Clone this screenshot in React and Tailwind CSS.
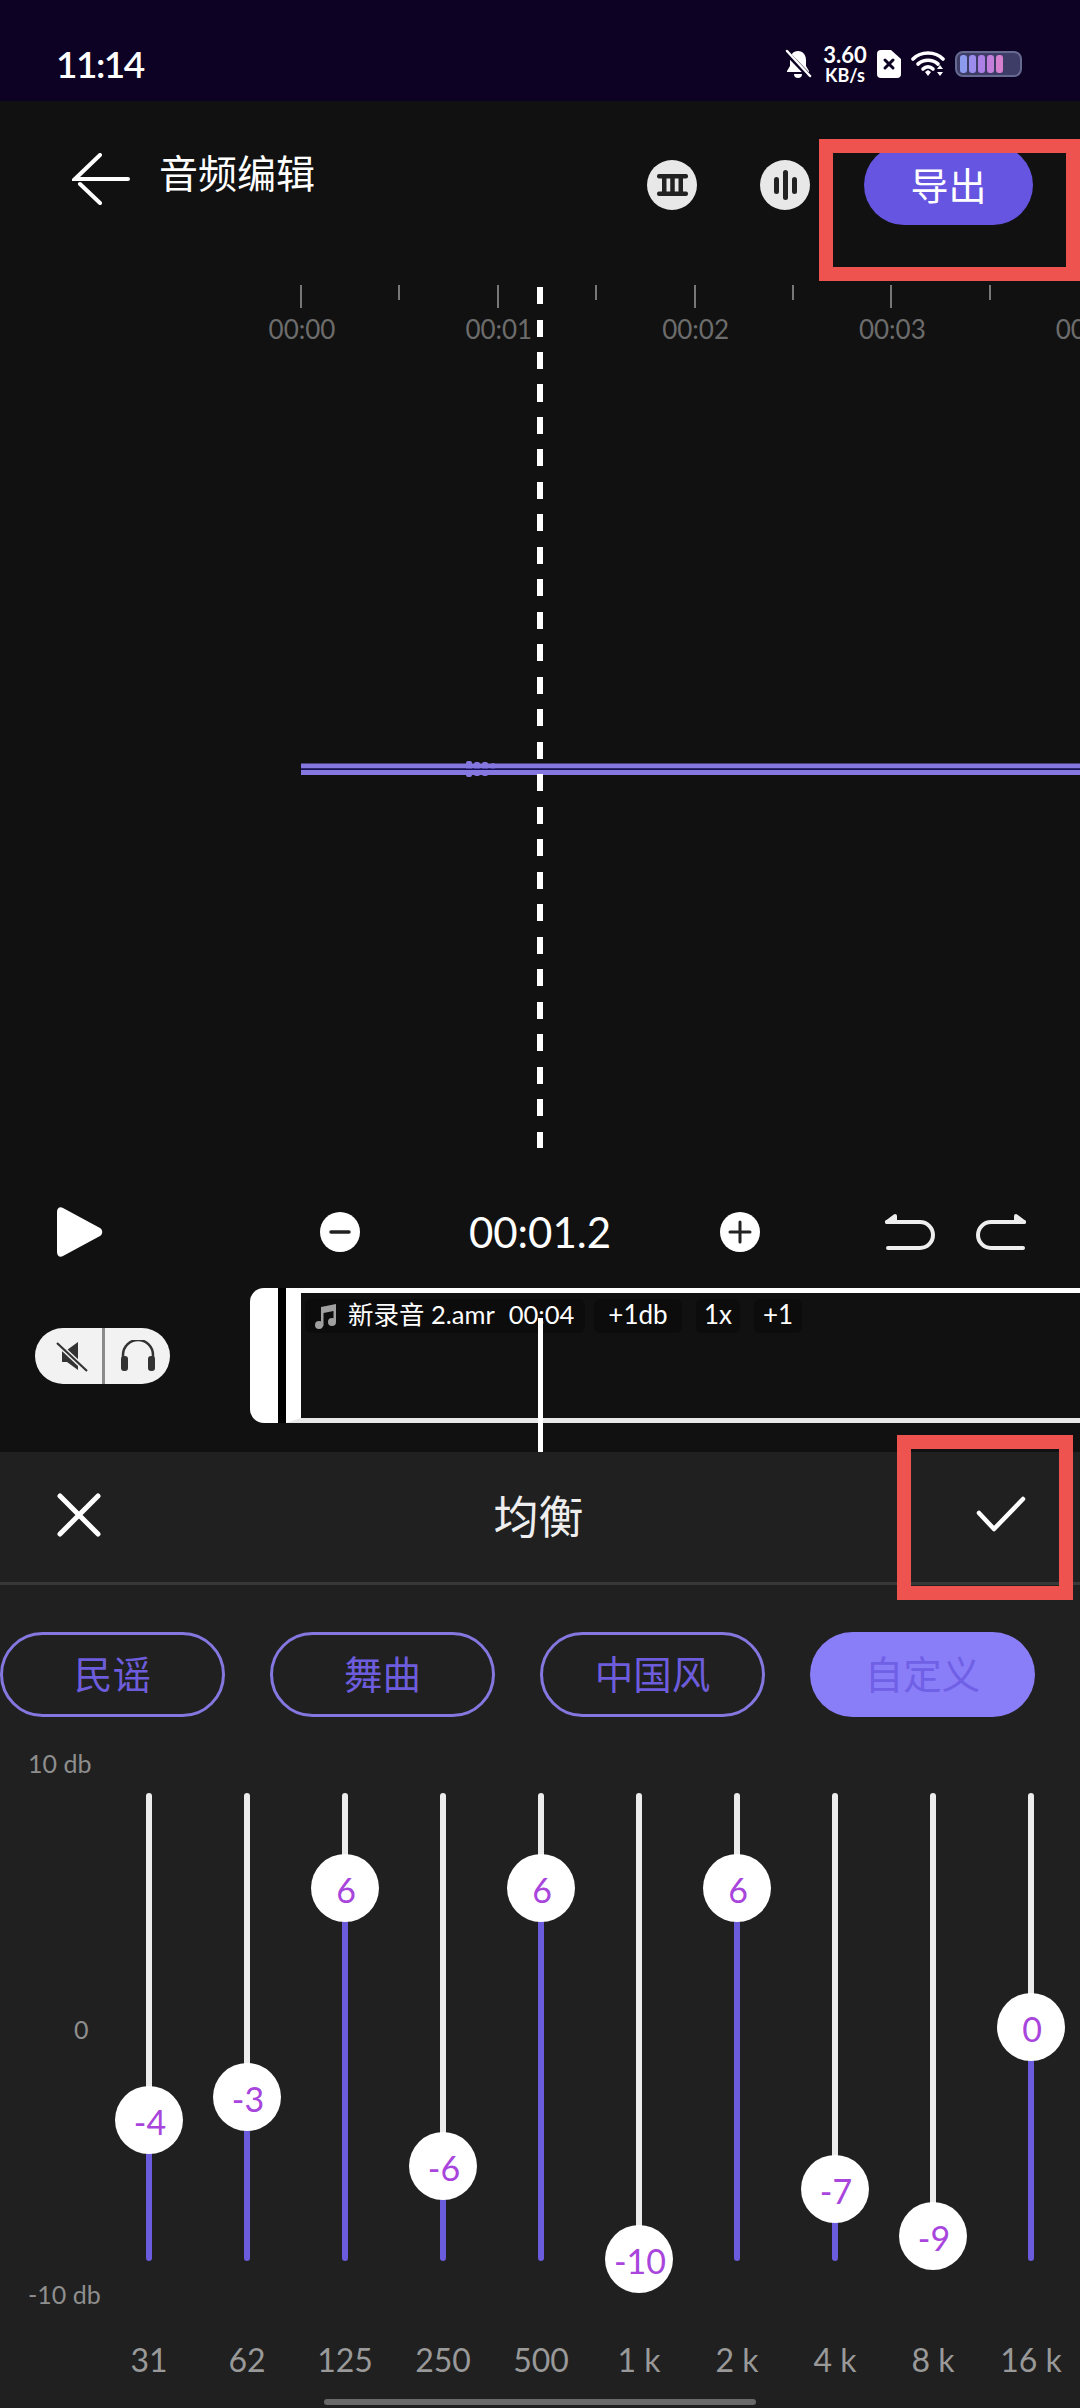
const BANDS = [
  { label: '31', db: -4 },
  { label: '62', db: -3 },
  { label: '125', db: 6 },
  { label: '250', db: -6 },
  { label: '500', db: 6 },
  { label: '1 k', db: -10 },
  { label: '2 k', db: 6 },
  { label: '4 k', db: -7 },
  { label: '8 k', db: -9 },
  { label: '16 k', db: 0 },
];

const PRESETS = ['民谣', '舞曲', '中国风'];
const RULER = ['00:00', '', '00:01', '', '00:02', '', '00:03', '', '00:04'];
const BATTERY_BARS = ['bg-[#8d9bee]', 'bg-[#9c8dec]', 'bg-[#ac80e6]', 'bg-[#c47fdc]', 'bg-[#d680cf]'];

function StatusIcons() {
  return (
    <div className="flex items-center text-white">
      <svg width="28" height="30" viewBox="0 0 28 30" fill="white" className="mr-[10px]">
        <path d="M14 2c5 0 8 4 8 9v6l3 5v1H3v-1l3-5v-6c0-5 3-9 8-9z" />
        <path d="M10 25h8a4 4 0 0 1-8 0z" />
        <path d="M2 3l24 25" stroke="#0d0224" strokeWidth="5" />
        <path d="M3 2l23 25" stroke="white" strokeWidth="2.5" strokeLinecap="round" />
      </svg>
      <div className="flex w-[46px] flex-col items-center font-bold leading-none">
        <span className="text-[22px] leading-[22px]">3.60</span>
        <span className="text-[18px] leading-[18px]">KB/s</span>
      </div>
      <svg width="24" height="28" viewBox="0 0 24 28" className="ml-[9px]">
        <path d="M4 0h10l10 9v15a4 4 0 0 1-4 4H4a4 4 0 0 1-4-4V4a4 4 0 0 1 4-4z" fill="white" />
        <path d="M8 10l8 8M16 10l-8 8" stroke="#0d0224" strokeWidth="3" strokeLinecap="round" />
      </svg>
      <svg width="35" height="27" viewBox="0 0 35 27" fill="none" stroke="white" className="ml-[10px]">
        <path d="M2 9c8-8 22-8 30 0" strokeWidth="3.6" strokeLinecap="round" />
        <path d="M7 14c6-5 14-5 20 0" strokeWidth="3.6" strokeLinecap="round" />
        <path d="M12 19c3-3 7-3 10 0" strokeWidth="3.6" strokeLinecap="round" />
        <path d="M14 22l3-2 3 2-3 4z" fill="white" stroke="none" />
        <path d="M26 19l3-4 3 4zM26 22l3 4 3-4z" fill="white" stroke="none" />
      </svg>
      <div className="ml-[9px] flex h-[26px] w-[67px] items-center gap-[2px] rounded-[8px] border-[2px] border-[#666a90] bg-[#3d3d68] px-[3px]">
        {BATTERY_BARS.map((color) => (
          <div key={color} className={`h-[18px] w-[7px] rounded-[3px] ${color}`} />
        ))}
      </div>
    </div>
  );
}

function Slider({ label, db }) {
  const center = 234 - db * 23.2;
  return (
    <div className="flex w-[98px] shrink-0 flex-col items-center pt-[76px]">
      <div className="relative flex h-[468px] w-[6px] flex-col">
        <div className="rounded-t-full bg-[#ececec]" style={{ height: center }} />
        <div className="flex-1 rounded-b-full bg-[#6a5cdc]" />
        <div
          className="absolute left-[-31px] flex h-[68px] w-[68px] items-center justify-center rounded-full bg-white pt-[3px] pl-[2px] text-[34px] text-[#a845dc]"
          style={{ top: center - 34 }}
        >
          {db}
        </div>
      </div>
      <div className="mt-[79px] h-[40px] whitespace-nowrap text-[32px] leading-[40px] text-[#999999]">{label}</div>
    </div>
  );
}

export default function App() {
  return (
    <div className="relative h-[2408px] w-[1080px] overflow-hidden bg-[#111111] font-[Lato,'Noto_Sans_CJK_SC',sans-serif] text-white">
      {/* status bar */}
      <div className="flex h-[101px] items-center justify-between bg-[#0d0224] pr-[58px] pl-[56px] pt-[26px]">
        <span className="text-[37px] leading-none font-semibold tracking-[-1.5px]">11:14</span>
        <StatusIcons />
      </div>

      {/* title row */}
      <div className="flex h-[184px] pt-[52px] pl-[72px]">
        <svg width="58" height="52" viewBox="0 0 58 52" fill="none" stroke="white" strokeWidth="4" strokeLinecap="round" className="shrink-0">
          <path d="M28 2L3 26h53M8 31l20 19" />
        </svg>
        <div className="ml-[29px] mt-[-4px] text-[39px] leading-[48px]">音频编辑</div>
        <div className="ml-[332px] flex h-[50px] w-[50px] shrink-0 items-center justify-center rounded-full bg-[#e8e8e8] mt-[7px]">
          <svg width="31" height="24" viewBox="0 0 31 24" fill="#222">
            <rect x="0" y="1" width="31" height="4.500" rx="2" />
            <rect x="0" y="18.500" width="31" height="4.500" rx="2" />
            <rect x="5" y="5" width="4.500" height="14" />
            <rect x="13.250" y="5" width="4.500" height="14" />
            <rect x="21.500" y="5" width="4.500" height="14" />
          </svg>
        </div>
        <div className="ml-[63px] flex h-[50px] w-[50px] shrink-0 items-center justify-center gap-[4px] rounded-full bg-[#e8e8e8] mt-[7px]">
          <div className="h-[17px] w-[5px] rounded-full bg-[#222]" />
          <div className="h-[30px] w-[5px] rounded-full bg-[#222]" />
          <div className="h-[17px] w-[5px] rounded-full bg-[#222]" />
        </div>
        <button className="ml-[54px] h-[80px] w-[169px] shrink-0 rounded-full bg-[#6555e0] text-[38px] text-white mt-[-8px]">导出</button>
      </div>

      {/* time ruler */}
      <div className="flex h-[65px] pl-[300px]">
        {RULER.map((time, i) => (
          <div key={i} className="flex w-[98.4px] shrink-0 flex-col items-start">
            <div className={`w-[2px] bg-[#777777] ${time ? 'h-[23px]' : 'h-[15px]'}`} />
            {time && (
              <div className="mt-[6px] ml-[2px] flex w-0 justify-center whitespace-nowrap text-[26px] leading-[30px] text-[#6c6c6c]">{time}</div>
            )}
          </div>
        ))}
      </div>

      {/* waveform */}
      <div className="flex h-[837px] items-center pl-[301px]">
        <svg width="779" height="24" viewBox="0 0 779 24" fill="#8478e0" className="shrink-0">
          <rect x="0" y="6.500" width="779" height="5" />
          <rect x="0" y="13" width="779" height="5" />
          <rect x="165" y="4" width="6" height="16" rx="2" />
          <rect x="173" y="5" width="6" height="14" rx="2" />
          <rect x="181" y="5" width="6" height="14" rx="2" />
          <rect x="190" y="6" width="4" height="12" rx="2" />
          <rect x="0" y="11.500" width="779" height="1.500" fill="#16105a" />
        </svg>
      </div>

      {/* transport */}
      <div className="flex h-[101px] items-center pb-[11px] pl-[57px]">
        <svg width="46" height="50" viewBox="0 0 46 50" fill="white" className="shrink-0">
          <path d="M0 5C0 1 3-1 6 1l37 20c3 2 3 6 0 8L6 49c-3 2-6 0-6-4z" />
        </svg>
        <svg width="40" height="40" viewBox="0 0 40 40" className="ml-[217px] shrink-0">
          <circle cx="20" cy="20" r="20" fill="white" />
          <path d="M11 20h18" stroke="#222" strokeWidth="3.5" strokeLinecap="round" />
        </svg>
        <div className="ml-[80px] w-[200px] shrink-0 text-center text-[42px] leading-none">00:01.2</div>
        <svg width="40" height="40" viewBox="0 0 40 40" className="ml-[80px] shrink-0">
          <circle cx="20" cy="20" r="20" fill="white" />
          <path d="M10 20h20M20 10v20" stroke="#222" strokeWidth="3" strokeLinecap="round" />
        </svg>
        <svg width="52" height="36" viewBox="0 0 52 36" fill="none" stroke="#eeeeee" strokeWidth="4" strokeLinecap="round" strokeLinejoin="round" className="ml-[124px] shrink-0">
          <path d="M4 34h32a13 13 0 0 0 0-26H3" />
          <path d="M11 2L3 8h8z" fill="#eeeeee" />
        </svg>
        <svg width="52" height="36" viewBox="0 0 52 36" fill="none" stroke="#eeeeee" strokeWidth="4" strokeLinecap="round" strokeLinejoin="round" className="ml-[39px] shrink-0">
          <path d="M48 34H16a13 13 0 0 1 0-26h33" />
          <path d="M41 2l8 6h-8z" fill="#eeeeee" />
        </svg>
      </div>

      {/* track row */}
      <div className="flex h-[135px]">
        <div className="flex w-[250px] shrink-0 items-center pl-[35px]">
          <div className="flex h-[56px] w-[135px] items-center rounded-full bg-[#f2f2f2]">
            <div className="flex w-[67px] justify-center pl-[6px]">
              <svg width="32" height="32" viewBox="0 0 32 32" fill="#333">
                <path d="M6 10h5l11-8v28l-11-8H6z" />
                <path d="M1 3l30 28" stroke="#f2f2f2" strokeWidth="5" />
                <path d="M1 3l30 28" stroke="#333" strokeWidth="2.2" />
              </svg>
            </div>
            <div className="h-[56px] w-[3px] bg-[#8a8a8a]" />
            <div className="flex flex-1 justify-center">
              <svg width="36" height="32" viewBox="0 0 36 32" fill="none">
                <path d="M3 20v-5a15 15 0 0 1 30 0v5" stroke="#333" strokeWidth="2.5" />
                <rect x="1" y="16" width="7" height="15" rx="3" fill="#333" />
                <rect x="28" y="16" width="7" height="15" rx="3" fill="#333" />
              </svg>
            </div>
          </div>
        </div>
        <div className="w-[28px] shrink-0 rounded-l-[14px] bg-white" />
        <div className="w-[8px] shrink-0 bg-black" />
        <div className="flex flex-1 items-start gap-[14px] border-t-[5px] border-b-[5px] border-l-[15px] border-t-white border-b-[#e8e8e8] border-l-white pt-[6px] pl-[4px]">
          <div className="flex h-[34px] w-[280px] shrink-0 items-center rounded-[6px] bg-[#0c0c0c] pb-[4px] pl-[8px] text-[25.5px] whitespace-nowrap">
            <svg width="26" height="26" viewBox="0 0 26 26" className="mt-[4px] shrink-0" fill="#a0a0a0">
              <path d="M8 4l15-3v18h-2.500V8L10.500 10v13H8z" />
              <circle cx="6" cy="22" r="4" />
              <circle cx="19" cy="19" r="4" />
            </svg>
            <span className="ml-[9px]">新录音 2.amr</span>
            <span className="ml-[14px]">00:04</span>
          </div>
          <div className="ml-[-5px] flex h-[34px] w-[88px] shrink-0 items-center justify-center rounded-[6px] bg-[#0c0c0c] pb-[4px] text-[26px]">+1db</div>
          <div className="flex h-[34px] w-[44px] shrink-0 items-center justify-center rounded-[6px] bg-[#0c0c0c] pb-[4px] text-[26px]">1x</div>
          <div className="flex h-[34px] w-[48px] shrink-0 items-center justify-center rounded-[6px] bg-[#0c0c0c] pb-[4px] text-[26px]">+1</div>
        </div>
      </div>
      <div className="h-[29px]" />

      {/* equalizer panel */}
      <div className="h-[956px] bg-[#202020]">
        <div className="flex h-[130px] items-center justify-between pr-[54px] pl-[57px]">
          <svg width="44" height="44" viewBox="0 0 44 44" fill="none" stroke="white" strokeWidth="5" strokeLinecap="round" className="mb-[4px]">
            <path d="M3 3l38 38M41 3L3 41" />
          </svg>
          <div className="text-[45px] leading-none text-[#eeeeee]">均衡</div>
          <svg width="50" height="36" viewBox="0 0 50 36" fill="none" stroke="white" strokeWidth="4.500" strokeLinecap="round" strokeLinejoin="round" className="mb-[6px]">
            <path d="M3 17l15 16L47 3" />
          </svg>
        </div>
        <div className="h-[3px] bg-[#383838]" />

        <div className="flex gap-[45px] pt-[47px]">
          {PRESETS.map((name) => (
            <div key={name} className="flex h-[85px] w-[225px] items-center justify-center rounded-full border-[3px] border-[#8478e0] text-[38.5px] text-[#6d5ddc]">
              {name}
            </div>
          ))}
          <div className="flex h-[85px] w-[225px] items-center justify-center rounded-full bg-[#8a7df8] text-[38.5px] text-[#6f60e6]">自定义</div>
        </div>

        <div className="flex">
          <div className="flex h-[592px] w-[100px] shrink-0 flex-col justify-between pt-[31px] text-[25px] leading-[30px] text-[#8e8e8e]">
            <div className="pl-[28px] whitespace-nowrap">10 db</div>
            <div className="pl-[74px]">0</div>
            <div className="pl-[28px] whitespace-nowrap">-10 db</div>
          </div>
          {BANDS.map((band) => (
            <Slider key={band.label} label={band.label} db={band.db} />
          ))}
        </div>
        <div className="mx-auto mt-[19px] h-[6px] w-[432px] rounded-full bg-[#6a6a6a]" />
      </div>

      {/* playhead */}
      <div className="absolute top-[287px] left-[537px] h-[861px] w-[6px] bg-[repeating-linear-gradient(to_bottom,#ffffff_0,#ffffff_17px,transparent_17px,transparent_32.5px)]" />
      <div className="absolute top-[1318px] left-[538px] h-[134px] w-[5px] bg-white" />

      {/* red annotation boxes */}
      <div className="absolute top-[139px] left-[819px] h-[142px] w-[261px] border-[14px] border-[#ef5350]" />
      <div className="absolute top-[1435px] left-[897px] h-[165px] w-[176px] border-[14px] border-[#ef5350]" />
    </div>
  );
}
